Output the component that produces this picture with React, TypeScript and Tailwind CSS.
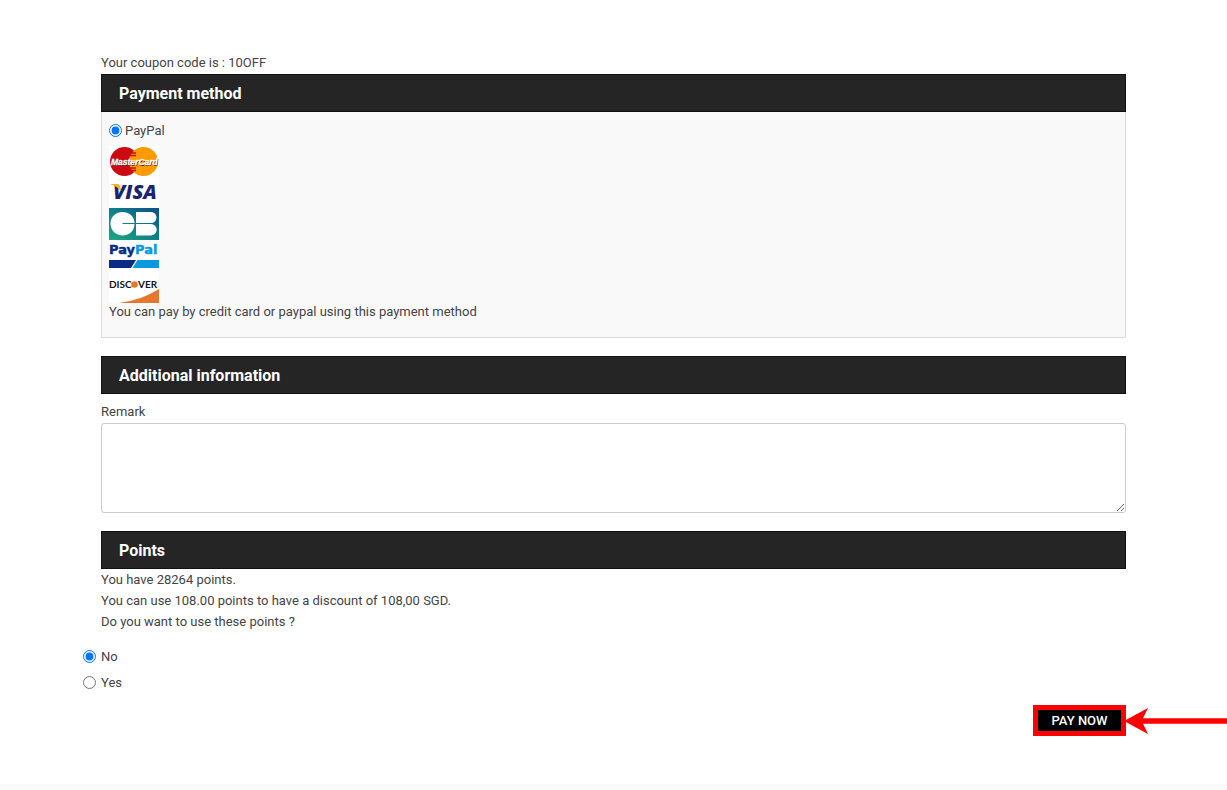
import * as React from "react";

const MasterCardLogo = () => (
    <svg viewBox="0 0 50 32" className="h-8 w-[50px] bg-white" role="img" aria-label="MasterCard">
        <circle cx="15.500" cy="15.500" r="14.500" fill="#cc0a14" />
        <circle cx="34.500" cy="15.500" r="14.500" fill="#ff9a00" />
        <path d="M21 7h6M20 9.500h7M20 22h7M21 24.500h6" stroke="#cc0a14" strokeWidth="1.300" />
        <text x="2.500" y="19.500" fontFamily="Liberation Sans" fontSize="8.500" fontWeight="700" fontStyle="italic" fill="#5a1408">MasterCard</text>
        <text x="2" y="19" fontFamily="Liberation Sans" fontSize="8.500" fontWeight="700" fontStyle="italic" fill="#fff" stroke="#fff" strokeWidth="0.300">MasterCard</text>
    </svg>
);

const VisaLogo = () => (
    <svg viewBox="0 0 50 30" className="h-[30px] w-[50px] bg-white" role="img" aria-label="Visa">
        <text x="4" y="21" fontFamily="Open Sans, sans-serif" fontSize="20" fontWeight="800" fontStyle="italic" fill="#1a2472">VISA</text>
        <path d="M2 6h6.500q2 0 2.500 2l1 5Q8.500 8.500 2 6.500z" fill="#f5b21a" />
    </svg>
);

const CarteBleueLogo = () => (
    <svg viewBox="0 0 50 32" className="h-8 w-[50px]" role="img" aria-label="CB">
        <defs>
            <linearGradient id="cb" x1="0" y1="1" x2="1" y2="0">
                <stop offset="0" stopColor="#1fa67f" />
                <stop offset="0.500" stopColor="#0d8088" />
                <stop offset="1" stopColor="#0a4f8a" />
            </linearGradient>
        </defs>
        <rect width="50" height="32" fill="url(#cb)" />
        <path d="M25.500 15H13.500v1h12c0 7-5.500 11.500-12 11.500S1.500 22.500 1.500 15.500 7 4 13.500 4s12 4.500 12 11z" fill="#fff" />
        <path d="M27 4h15a5.500 5.500 0 0 1 0 11H27zM27 16h15a5.700 5.700 0 0 1 0 11.500H27z" fill="#fff" />
    </svg>
);

const PayPalLogo = () => (
    <svg viewBox="0 0 50 28" className="h-7 w-[50px] bg-white" role="img" aria-label="PayPal">
        <text x="0" y="14" fontFamily="DejaVu Sans" fontSize="13" fontWeight="700" fill="#0b2a85" stroke="#0b2a85" strokeWidth="0.400">
            Pay<tspan fill="#0a98e0" stroke="#0a98e0">Pal</tspan>
        </text>
        <path d="M0 20h27l-5 8H0z" fill="#0b2a85" />
        <path d="M28.500 20H50v8H23.500z" fill="#0a98e0" />
    </svg>
);

const DiscoverLogo = () => (
    <svg viewBox="0 0 50 35" className="h-[35px] w-[50px] bg-white" role="img" aria-label="Discover">
        <text x="0" y="20" fontFamily="Lato, sans-serif" fontSize="10" fontWeight="700" fill="#161616">DISC</text>
        <circle cx="25.500" cy="16.500" r="3.300" fill="#e8772e" />
        <text x="29" y="20" fontFamily="Lato, sans-serif" fontSize="10" fontWeight="700" fill="#161616">VER</text>
        <path d="M10 35Q33 32 50 21v14z" fill="#e8772e" />
    </svg>
);

const SectionTitle = ({ children }: { children: React.ReactNode }) => (
    <h2 className="border border-[#111] bg-[#252525] px-[17px] pt-0.5 text-base leading-[34px] font-bold text-white">{children}</h2>
);

export default function App() {
    const [usePoints, setUsePoints] = React.useState("no");

    return (
        <div className="flex min-h-screen flex-col bg-white font-[Roboto,sans-serif] text-[13px] leading-[21px] text-[#444]">
            <main className="flex-1 overflow-x-clip px-[101px] pt-[52px] pb-12">
                <p className="pb-px">Your coupon code is : 10OFF</p>

                <section>
                    <SectionTitle>Payment method</SectionTitle>
                    <div className="border border-t-0 border-[#ddd] bg-[#f9f9f9] px-[7px] pt-2 pb-4">
                        <label className="flex items-center gap-[3px]">
                            <input type="radio" name="payment" defaultChecked className="size-[13px]" />
                            PayPal
                        </label>
                        <div className="mt-[5px] flex flex-col items-start">
                            <MasterCardLogo />
                            <VisaLogo />
                            <CarteBleueLogo />
                            <PayPalLogo />
                            <DiscoverLogo />
                        </div>
                        <p className="leading-[18px]">You can pay by credit card or paypal using this payment method</p>
                    </div>
                </section>

                <section className="mt-[18px]">
                    <SectionTitle>Additional information</SectionTitle>
                    <label htmlFor="remark" className="mt-[7px] block">Remark</label>
                    <textarea id="remark" className="mt-px block h-[90px] w-full rounded-[3px] border border-[#ccc] bg-white p-2" />
                </section>

                <section className="mt-[18px]">
                    <SectionTitle>Points</SectionTitle>
                    <p>You have 28264 points.</p>
                    <p>You can use 108.00 points to have a discount of 108,00 SGD.</p>
                    <p>Do you want to use these points ?</p>
                    <div className="mt-[14px] -ml-[18px] flex flex-col items-start gap-[5px]">
                        <label className="flex items-center gap-[5px]">
                            <input type="radio" name="points" value="no" checked={usePoints === "no"} onChange={() => setUsePoints("no")} className="size-[13px]" />
                            No
                        </label>
                        <label className="flex items-center gap-[5px]">
                            <input type="radio" name="points" value="yes" checked={usePoints === "yes"} onChange={() => setUsePoints("yes")} className="size-[13px]" />
                            Yes
                        </label>
                    </div>
                </section>

                <div className="mt-3 flex justify-end">
                    <div className="relative">
                        <button type="button" className="block w-[93px] border-5 border-[#f00] bg-black text-[13px] leading-[21px] font-medium text-white">PAY NOW</button>
                        <svg viewBox="0 0 104 26" className="absolute top-[3px] -right-[101px] h-[26px] w-[104px]" aria-hidden="true">
                            <path d="M1 13L25 0l-5 10.200h84v5.600H20L25 26z" fill="#f00" />
                        </svg>
                    </div>
                </div>
            </main>
            <footer className="h-1.5 bg-[#fafafa]" />
        </div>
    );
}
